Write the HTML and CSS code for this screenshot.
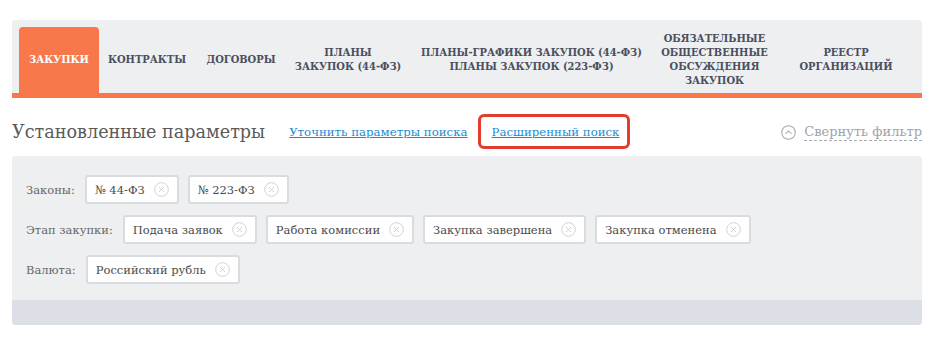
FILE: index.html
```html
<!DOCTYPE html>
<html lang="ru">
<head>
<meta charset="utf-8">
<title>Закупки</title>
<link rel="stylesheet" href="styles.css">
</head>
<body>
<div class="page">
  <nav class="tabs">
    <a class="tab tab-1 active">ЗАКУПКИ</a>
    <a class="tab tab-2">КОНТРАКТЫ</a>
    <a class="tab tab-3">ДОГОВОРЫ</a>
    <a class="tab tab-4">ПЛАНЫ<br>ЗАКУПОК (44-ФЗ)</a>
    <a class="tab tab-5">ПЛАНЫ-ГРАФИКИ ЗАКУПОК (44-ФЗ)<br>ПЛАНЫ ЗАКУПОК (223-ФЗ)</a>
    <a class="tab tab-6">ОБЯЗАТЕЛЬНЫЕ<br>ОБЩЕСТВЕННЫЕ<br>ОБСУЖДЕНИЯ<br>ЗАКУПОК</a>
    <a class="tab tab-7">РЕЕСТР<br>ОРГАНИЗАЦИЙ</a>
  </nav>

  <div class="params-head">
    <h2 class="params-title">Установленные параметры</h2>
    <a class="link">Уточнить параметры поиска</a>
    <span class="highlight"><a class="link">Расширенный поиск</a></span>
    <a class="collapse">
      <svg class="collapse-icon" width="15" height="15" viewBox="0 0 16 16"><circle cx="8" cy="8" r="7.2" fill="none" stroke="#a3a6ab" stroke-width="1.1"/><path d="M4.8 9.6 L8 6.4 L11.2 9.6" fill="none" stroke="#a3a6ab" stroke-width="1.1"/></svg>
      <span class="collapse-text">Свернуть фильтр</span>
    </a>
  </div>

  <section class="filter">
    <div class="filter-body">
      <div class="row">
        <span class="label">Законы:</span>
        <span class="chip">№ 44-ФЗ<svg class="x" width="15" height="15" viewBox="0 0 16 16"><circle cx="8" cy="8" r="7.3" fill="none" stroke="#cdcfd3" stroke-width="1"/><path d="M5.3 5.3 L10.7 10.7 M10.7 5.3 L5.3 10.7" stroke="#cdcfd3" stroke-width="1"/></svg></span>
        <span class="chip">№ 223-ФЗ<svg class="x" width="15" height="15" viewBox="0 0 16 16"><circle cx="8" cy="8" r="7.3" fill="none" stroke="#cdcfd3" stroke-width="1"/><path d="M5.3 5.3 L10.7 10.7 M10.7 5.3 L5.3 10.7" stroke="#cdcfd3" stroke-width="1"/></svg></span>
      </div>
      <div class="row">
        <span class="label">Этап закупки:</span>
        <span class="chip">Подача заявок<svg class="x" width="15" height="15" viewBox="0 0 16 16"><circle cx="8" cy="8" r="7.3" fill="none" stroke="#cdcfd3" stroke-width="1"/><path d="M5.3 5.3 L10.7 10.7 M10.7 5.3 L5.3 10.7" stroke="#cdcfd3" stroke-width="1"/></svg></span>
        <span class="chip">Работа комиссии<svg class="x" width="15" height="15" viewBox="0 0 16 16"><circle cx="8" cy="8" r="7.3" fill="none" stroke="#cdcfd3" stroke-width="1"/><path d="M5.3 5.3 L10.7 10.7 M10.7 5.3 L5.3 10.7" stroke="#cdcfd3" stroke-width="1"/></svg></span>
        <span class="chip">Закупка завершена<svg class="x" width="15" height="15" viewBox="0 0 16 16"><circle cx="8" cy="8" r="7.3" fill="none" stroke="#cdcfd3" stroke-width="1"/><path d="M5.3 5.3 L10.7 10.7 M10.7 5.3 L5.3 10.7" stroke="#cdcfd3" stroke-width="1"/></svg></span>
        <span class="chip">Закупка отменена<svg class="x" width="15" height="15" viewBox="0 0 16 16"><circle cx="8" cy="8" r="7.3" fill="none" stroke="#cdcfd3" stroke-width="1"/><path d="M5.3 5.3 L10.7 10.7 M10.7 5.3 L5.3 10.7" stroke="#cdcfd3" stroke-width="1"/></svg></span>
      </div>
      <div class="row">
        <span class="label">Валюта:</span>
        <span class="chip">Российский рубль<svg class="x" width="15" height="15" viewBox="0 0 16 16"><circle cx="8" cy="8" r="7.3" fill="none" stroke="#cdcfd3" stroke-width="1"/><path d="M5.3 5.3 L10.7 10.7 M10.7 5.3 L5.3 10.7" stroke="#cdcfd3" stroke-width="1"/></svg></span>
      </div>
    </div>
    <div class="filter-foot"></div>
  </section>
</div>
</body>
</html>
```

FILE: styles.css
```css
* { box-sizing: border-box; }
html, body { margin: 0; padding: 0; background: #fff; }
body { font-family: "DejaVu Serif", "Liberation Serif", serif; color: #555; }

.page { padding: 20px 19px 0 12px; width: 941px; }

.tabs {
  display: flex;
  align-items: stretch;
  background: #eeeff1;
  border-radius: 4px 4px 0 0;
  padding: 7px 0 0 7px;
  height: 78px;
  border-bottom: 5px solid #f8784b;
}
.tab {
  flex: none;
  display: flex;
  align-items: center;
  justify-content: center;
  text-align: center;
  font-family: "DejaVu Serif Condensed", "DejaVu Serif", serif;
  font-size: 11px;
  font-weight: bold;
  line-height: 14px;
  color: #4a5060;
  white-space: nowrap;
}
.tab-1 { width: 80px; }
.tab-2 { width: 96px; }
.tab-3 { width: 92px; }
.tab-4 { width: 122px; }
.tab-5 { width: 245px; }
.tab-6 { width: 121px; }
.tab-7 { width: 142px; }
.tab.active {
  background: #f8784b;
  color: #fff;
  border-radius: 4px 4px 0 0;
}

.params-head {
  display: flex;
  align-items: center;
  height: 35px;
  margin-top: 16px;
}
.params-title {
  margin: 0;
  font-size: 17.6px;
  font-weight: normal;
  color: #5a5a5a;
}
.link {
  color: #1b8bd1;
  text-decoration: underline;
  font-size: 11.75px;
}
.params-title + .link { margin-left: 24px; }
.highlight {
  margin-left: 10px;
  height: 35px;
  display: flex;
  align-items: center;
  padding: 0 8px 0 11px;
  border: 3px solid #e23b30;
  border-radius: 6px;
}
.collapse {
  margin-left: auto;
  display: flex;
  align-items: center;
  gap: 8px;
  color: #9ea2a9;
  font-size: 13px;
  padding-top: 2px;
}
.collapse-icon { display: block; }
.collapse-text { border-bottom: 1px dashed #a9acb1; line-height: 16px; }

.filter {
  margin-top: 7px;
  background: #eeeff1;
  border-radius: 4px;
  overflow: hidden;
}
.filter-body {
  padding: 19px 14px 16px 14px;
  display: flex;
  flex-direction: column;
  gap: 11px;
}
.row {
  display: flex;
  align-items: center;
  gap: 9px;
}
.label {
  font-size: 11.5px;
  color: #666;
  margin-right: 1px;
}
.chip {
  display: flex;
  align-items: center;
  height: 29px;
  background: #fff;
  border: 2px solid #d9dbdf;
  border-radius: 3px;
  padding: 0 8px 0 8px;
  font-size: 11.5px;
  color: #4a4a4a;
  white-space: nowrap;
}
.chip .x { margin-left: 9px; display: block; }
.filter-foot { height: 25px; background: #dcdfe5; }
```
